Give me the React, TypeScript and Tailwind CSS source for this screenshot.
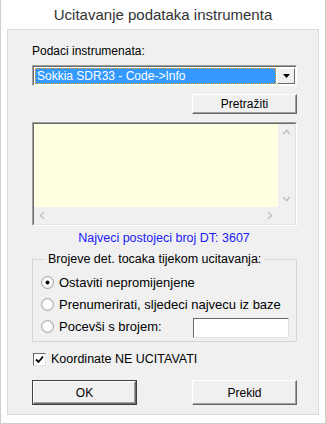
import React from 'react';

const font = { fontFamily: '"Liberation Sans", Arial, sans-serif' };

// classic raised 3D button
const Btn = ({ label, def = false, small = false }: { label: string; def?: boolean; small?: boolean }) => (
  <div
    className={`${small ? 'h-[20px]' : 'h-[25px]'} w-[105px] flex items-center justify-center text-[12px] text-black bg-[#f0f0f0] ${
      def ? 'border border-[#404040]' : ''
    }`}
  >
    <div className="w-full h-full border border-t-white border-l-white border-r-[#696969] border-b-[#696969] shadow-[inset_-1px_-1px_0_#a0a0a0] flex items-center justify-center">
      {label}
    </div>
  </div>
);

const Radio = ({ checked = false }: { checked?: boolean }) => (
  <svg width="13" height="13" viewBox="0 0 13 13" className="shrink-0">
    <circle cx="6.5" cy="6.5" r="6" fill="#ffffff" stroke="#a0a0a0" />
    <circle cx="6.5" cy="6.5" r="4.8" fill="#ffffff" stroke="#e3e3e3" />
    {checked && <circle cx="6.5" cy="6.5" r="2" fill="#000000" />}
  </svg>
);

const Chevron = ({ dir }: { dir: 'up' | 'down' | 'left' | 'right' }) => {
  const d = {
    up: 'M1 6 L4.5 2.5 L8 6',
    down: 'M1 3 L4.5 6.5 L8 3',
    left: 'M6 1 L2.5 4.5 L6 8',
    right: 'M3 1 L6.5 4.5 L3 8',
  }[dir];
  return (
    <svg width="9" height="9" viewBox="0 0 9 9">
      <path d={d} fill="none" stroke="#c2c2c2" strokeWidth="1.6" />
    </svg>
  );
};

export default function App() {
  return (
    <div style={font} className="w-[326px] h-[424px] bg-white border border-[#cfcfcf] border-t-0 flex flex-col">
      <div className="h-[29px] flex items-center justify-center text-[15px] text-[#333333] pt-[1px]">
        Ucitavanje podataka instrumenta
      </div>

      <div className="mx-[6px] h-[386px] bg-[#f0f0f0] border border-[#dadada] pl-[24px] pr-[21px] text-[12px] text-black">
        <div className="mt-[14px] leading-[14px]">Podaci instrumenata:</div>

        {/* combo */}
        <div className="mt-[7px] h-[21px] w-[265px] flex border border-t-[#a0a0a0] border-l-[#a0a0a0] border-r-white border-b-white">
          <div className="flex-1 flex border-t border-l border-[#696969] bg-white">
            <div className="flex-1 m-[1px] bg-[#3399ff] border border-dotted border-[#ff9a1a] text-white text-[12px] leading-[15px] pl-[1px] overflow-hidden whitespace-nowrap">
              Sokkia SDR33 - Code-&gt;Info
            </div>
            <div className="w-[18px] my-[1px] mr-[1px] bg-[#f0f0f0] border border-t-white border-l-white border-r-[#696969] border-b-[#696969] flex items-center justify-center">
              <svg width="7" height="4" viewBox="0 0 7 4">
                <path d="M0 0 H7 L3.5 4 Z" fill="#000" />
              </svg>
            </div>
          </div>
        </div>

        <div className="mt-[8px] flex justify-end">
          <Btn label="Pretražiti" small />
        </div>

        {/* text area with scrollbars */}
        <div className="mt-[8px] h-[104px] w-[265px] border border-t-[#a0a0a0] border-l-[#a0a0a0] border-r-white border-b-white">
          <div className="h-full border-t border-l border-[#696969] border-r border-r-[#e3e3e3] border-b border-b-[#e3e3e3] grid grid-cols-[1fr_17px] grid-rows-[1fr_17px]">
            <div className="bg-[#ffffe1]" />
            <div className="bg-[#f0f0f0] flex flex-col items-center justify-between py-[4px]">
              <Chevron dir="up" />
              <Chevron dir="down" />
            </div>
            <div className="bg-[#f0f0f0] flex items-center justify-between px-[4px]">
              <Chevron dir="left" />
              <Chevron dir="right" />
            </div>
            <div className="bg-[#f0f0f0]" />
          </div>
        </div>

        <div className="mt-[5px] text-center text-[#1a1aff] text-[12.5px] leading-[15px] pr-[1px]">
          Najveci postojeci broj DT: 3607
        </div>

        {/* group box */}
        <div className="mt-[13px] relative h-[83px] w-[265px] border border-[#d5d5d5]">
          <div className="absolute -top-[8px] left-[12px] px-[3px] bg-[#f0f0f0] text-[12.5px] leading-[15px]">
            Brojeve det. tocaka tijekom ucitavanja:
          </div>
          <div className="pt-[15px] pl-[8px] flex flex-col gap-[7px] text-[13px] leading-[15px]">
            <div className="flex items-center gap-[5px]">
              <Radio checked />
              <span>Ostaviti nepromijenjene</span>
            </div>
            <div className="flex items-center gap-[5px]">
              <Radio />
              <span>Prenumerirati, sljedeci najvecu iz baze</span>
            </div>
            <div className="flex items-center gap-[5px] h-[15px]">
              <Radio />
              <span>Pocevši s brojem:</span>
              <div className="ml-auto mr-[7px] w-[96px] h-[20px] bg-white border border-t-[#696969] border-l-[#696969] border-r-[#e3e3e3] border-b-[#e3e3e3] mt-[3px]" />
            </div>
          </div>
        </div>

        {/* checkbox */}
        <div className="mt-[10px] flex items-center gap-[5px] text-[12.5px] leading-[15px]">
          <div className="w-[13px] h-[13px] ml-[1px] bg-white border border-t-[#696969] border-l-[#696969] border-r-[#e3e3e3] border-b-[#e3e3e3] flex items-center justify-center">
            <svg width="9" height="9" viewBox="0 0 9 9">
              <path d="M1 4.5 L3.5 7 L8 1.5" fill="none" stroke="#000" strokeWidth="1.8" />
            </svg>
          </div>
          <span>Koordinate NE UCITAVATI</span>
        </div>

        <div className="mt-[13px] flex justify-between">
          <Btn label="OK" def />
          <Btn label="Prekid" />
        </div>
      </div>
    </div>
  );
}
